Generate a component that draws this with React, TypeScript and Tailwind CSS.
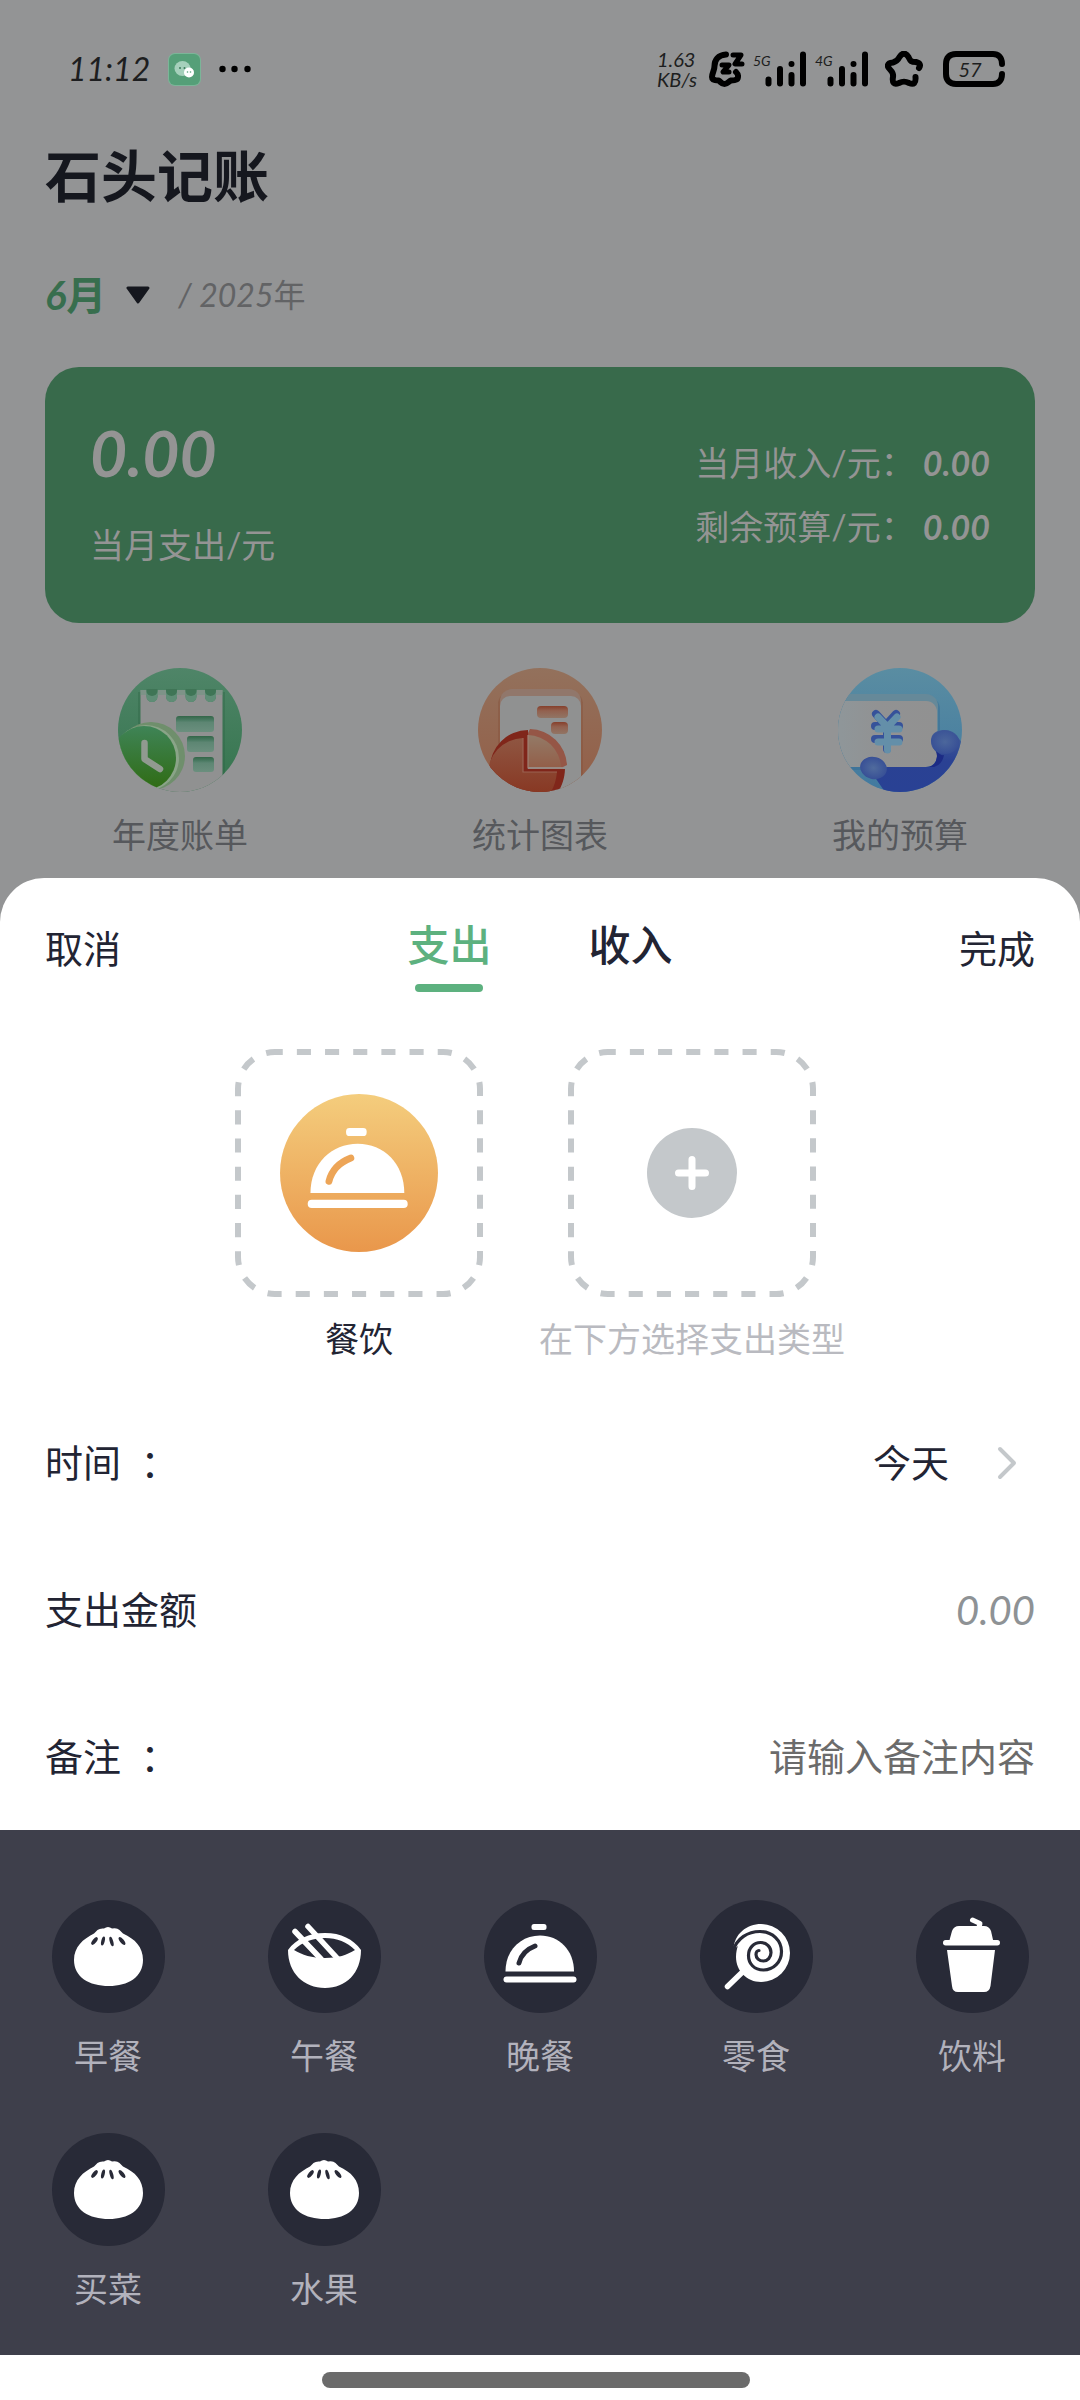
import React, { useState } from 'react';
import clsx from 'clsx';

type IconComponent = React.FC;

const AnnualBillIcon: IconComponent = () => (
  <svg viewBox="0 0 124 124" className="h-[124px] w-[124px]" aria-hidden="true">
    <defs>
      <clipPath id="bill-clip">
        <circle cx="62" cy="62" r="62" />
      </clipPath>
      <linearGradient id="bill-bg" x1="0" y1="0" x2="0" y2="1">
        <stop offset="0" stopColor="#4f8568" />
        <stop offset="1" stopColor="#34744d" />
      </linearGradient>
      <linearGradient id="bill-bar" x1="0" y1="0" x2="0" y2="1">
        <stop offset="0" stopColor="#336648" />
        <stop offset="0.25" stopColor="#4a7a62" />
        <stop offset="0.4" stopColor="#5d8673" />
        <stop offset="1" stopColor="#6b8f7e" />
      </linearGradient>
      <linearGradient id="bill-clock" x1="0" y1="0" x2="0" y2="1">
        <stop offset="0" stopColor="#3f8457" />
        <stop offset="1" stopColor="#2f6b12" />
      </linearGradient>
    </defs>
    <g clipPath="url(#bill-clip)">
      <rect width="124" height="124" fill="url(#bill-bg)" />
      <path d="M20 24h3v100h-3zM104 24h3v100h-3z" fill="#2c6143" opacity="0.35" />
      <path
        d="M22.500 22H28.500V28.500A5.500 5.500 0 0 0 39.500 28.500V22H48V28.500A5.500 5.500 0 0 0 59 28.500V22H67.500V28.500A5.500 5.500 0 0 0 78.500 28.500V22H87V28.500A5.500 5.500 0 0 0 98 28.500V22H104.500V124H22.500Z"
        fill="#909191"
      />
      <path d="M22.500 22H104.500V27H22.500Z" fill="#6f9581" opacity="0.55" />
      {[34, 53.5, 73, 92.5].map((x) => (
        <g key={x}>
          <path d={`M${x - 5.5} 22V28.500A5.500 5.500 0 0 0 ${x + 5.5} 28.500V22Z`} fill="#5f8d76" />
          <path d={`M${x - 5.5} 21V23A5.500 5 0 0 0 ${x + 5.5} 23V21Z`} fill="#3f7556" />
        </g>
      ))}
      <rect x="58" y="48" width="38" height="16" rx="3" fill="url(#bill-bar)" />
      <rect x="69" y="68" width="27" height="16" rx="3" fill="url(#bill-bar)" />
      <rect x="75" y="89" width="21" height="15" rx="3" fill="url(#bill-bar)" />
      <circle cx="33" cy="88" r="34" fill="#6f8f6c" />
      <circle cx="28" cy="90" r="33" fill="#8aa488" />
      <circle cx="26" cy="90" r="32" fill="url(#bill-clock)" />
      <path d="M26.500 75V91L42 101" fill="none" stroke="#919a90" strokeWidth="6.500" strokeLinecap="round" strokeLinejoin="round" />
    </g>
  </svg>
);

const StatsIcon: IconComponent = () => (
  <svg viewBox="0 0 124 124" className="h-[124px] w-[124px]" aria-hidden="true">
    <defs>
      <clipPath id="stats-clip">
        <circle cx="62" cy="62" r="62" />
      </clipPath>
      <linearGradient id="stats-bg" x1="0" y1="0" x2="0" y2="1">
        <stop offset="0" stopColor="#93715c" />
        <stop offset="1" stopColor="#935e47" />
      </linearGradient>
      <linearGradient id="stats-pie" x1="0" y1="0" x2="0" y2="1">
        <stop offset="0" stopColor="#8f5642" />
        <stop offset="1" stopColor="#86301b" />
      </linearGradient>
      <linearGradient id="stats-slice" x1="0" y1="0" x2="0" y2="1">
        <stop offset="0" stopColor="#937a67" />
        <stop offset="1" stopColor="#935f49" />
      </linearGradient>
      <linearGradient id="stats-bar" x1="0" y1="0" x2="0" y2="1">
        <stop offset="0" stopColor="#863f2b" />
        <stop offset="0.4" stopColor="#92614f" />
        <stop offset="1" stopColor="#917565" />
      </linearGradient>
    </defs>
    <g clipPath="url(#stats-clip)">
      <rect width="124" height="124" fill="url(#stats-bg)" />
      <rect x="20" y="24" width="85" height="112" rx="12" fill="#854f3a" opacity="0.4" />
      <rect x="22" y="21" width="81" height="114" rx="12" fill="#91776b" />
      <rect x="22" y="28" width="81" height="110" rx="10" fill="#909191" />
      <rect x="59" y="38" width="31" height="12" rx="4" fill="url(#stats-bar)" />
      <rect x="73" y="54" width="17" height="12" rx="4" fill="url(#stats-bar)" />
      <path d="M50 62A38 38 0 0 0 12 100A38 38 0 0 0 50 138C72 138 86 124 87 101H50Z" fill="#80261a" />
      <path d="M45 70A36 36 0 0 0 10 108A34 34 0 0 0 44 140C66 140 77 124 79 104H45Z" fill="url(#stats-pie)" />
      <path d="M45 70V104H79" fill="none" stroke="#9a6352" strokeWidth="1.200" />
      <path d="M52 61A38 38 0 0 1 89 97L85 99H50V65Z" fill="#955646" />
      <path d="M50 67A34 34 0 0 1 83 99H50Z" fill="url(#stats-slice)" />
      <path d="M50 67V100H85" fill="none" stroke="#a08174" strokeWidth="1.200" />
    </g>
  </svg>
);

const BudgetIcon: IconComponent = () => (
  <svg viewBox="0 0 124 124" className="h-[124px] w-[124px]" aria-hidden="true">
    <defs>
      <clipPath id="budget-clip">
        <circle cx="62" cy="62" r="62" />
      </clipPath>
      <linearGradient id="budget-bg" x1="0" y1="0" x2="0" y2="1">
        <stop offset="0" stopColor="#5a8da2" />
        <stop offset="1" stopColor="#41799f" />
      </linearGradient>
      <linearGradient id="budget-card" x1="0" y1="0" x2="1" y2="0">
        <stop offset="0" stopColor="#8f9699" />
        <stop offset="0.2" stopColor="#8f9699" />
        <stop offset="0.5" stopColor="#919293" />
        <stop offset="1" stopColor="#919191" />
      </linearGradient>
      <linearGradient id="budget-hand" x1="0" y1="0" x2="0" y2="1">
        <stop offset="0" stopColor="#456197" />
        <stop offset="0.5" stopColor="#2a4193" />
        <stop offset="1" stopColor="#294194" />
      </linearGradient>
      <radialGradient id="budget-thumb">
        <stop offset="0" stopColor="#506b9d" />
        <stop offset="1" stopColor="#385096" />
      </radialGradient>
    </defs>
    <g clipPath="url(#budget-clip)">
      <rect width="124" height="124" fill="url(#budget-bg)" />
      <rect x="-20" y="29" width="122" height="73" rx="12" fill="#356b92" opacity="0.45" />
      <rect x="-20" y="26" width="120" height="70" rx="12" fill="#668999" />
      <rect x="-20" y="33" width="119" height="66" rx="11" fill="url(#budget-card)" />
      <path
        d="M36 108L47 124H124V75Q117 62 105 62Q93 63 93 73Q94 80 99 85V90Q98 99 88 99H49Z"
        fill="url(#budget-hand)"
      />
      <path d="M98 83Q103 88 106 87Q104 97 96 99H88Q98 99 99 88Z" fill="#1c2b85" />
      <ellipse cx="107" cy="74" rx="14" ry="12" fill="url(#budget-thumb)" opacity="0.8" />
      <ellipse cx="35.500" cy="100" rx="13.500" ry="11" fill="url(#budget-thumb)" transform="rotate(14 35.500 100)" />
      <path d="M38 46L48 57L58 46M37 58H61M37 71H61M49 58V81" fill="none" stroke="#36529a" strokeWidth="8" strokeLinecap="round" strokeLinejoin="round" />
      <path d="M40 49L49.500 59L59 49M40 61H61M40 74H61M49.500 60V82" fill="none" stroke="#648fa9" strokeWidth="7" strokeLinecap="round" strokeLinejoin="round" />
    </g>
  </svg>
);

const BunIcon: IconComponent = () => (
  <svg viewBox="0 0 113 113" className="h-[113px] w-[113px]" aria-hidden="true">
    <path
      d="M45.500 30Q48 28 52 28.500Q56 25.500 60 28.500Q65 27.500 67.500 30L71 33.500C83 39 91 47 91 60C91 77 76 86 57 86C37 86 22 77 22 60C22 47 31 39 42 33.500Z"
      fill="#fff"
    />
    <g fill="#282a37">
      <ellipse cx="42.500" cy="41" rx="2" ry="4.600" transform="rotate(38 42.500 41)" />
      <ellipse cx="51" cy="41" rx="1.700" ry="4.600" transform="rotate(14 51 41)" />
      <ellipse cx="59.500" cy="41.500" rx="1.700" ry="5" transform="rotate(-16 59.500 41.500)" />
      <ellipse cx="70" cy="41" rx="2" ry="4.800" transform="rotate(-38 70 41)" />
    </g>
  </svg>
);

const BowlIcon: IconComponent = () => (
  <svg viewBox="0 0 113 113" className="h-[113px] w-[113px]" aria-hidden="true">
    <path
      fillRule="evenodd"
      d="M20 50C28 39 41 33 57 33S85 39 93 50C93 73 78 88 57 88S20 73 20 50ZM26 50C34 55 44 58 57 58S79 55 87 50C79 42 69 38 57 38S34 42 26 50Z"
      fill="#fff"
    />
    <path d="M27 31.500L53 59M40 26.500L70 59" fill="none" stroke="#fff" strokeWidth="5.500" strokeLinecap="round" />
  </svg>
);

const ClocheShape: React.FC<{ shine: string }> = ({ shine }) => (
  <>
    <rect x="47.500" y="24" width="15" height="6" rx="2.500" fill="#fff" />
    <path d="M21.500 71.500C21.500 50 37 35.500 56 35.500S90 50 90 71.500Z" fill="#fff" />
    <rect x="19.500" y="76.500" width="73" height="6" rx="3" fill="#fff" />
    <path d="M35 63Q38 51 51 46" fill="none" stroke={shine} strokeWidth="5" strokeLinecap="round" />
  </>
);

const ClocheIcon: IconComponent = () => (
  <svg viewBox="0 0 113 113" className="h-[113px] w-[113px]" aria-hidden="true">
    <ClocheShape shine="#282a37" />
  </svg>
);

const LollipopIcon: IconComponent = () => (
  <svg viewBox="0 0 113 113" className="h-[113px] w-[113px]" aria-hidden="true">
    <path d="M27.500 86.500L43 71.500" stroke="#fff" strokeWidth="5.500" strokeLinecap="round" />
    <path
      d="M33.500 49.500C34 34 47 24 61 24A29 29 0 0 1 61 82C47 82 36 71 36 57C36 52 37 48 38 46Z"
      fill="#fff"
    />
    <path
      d="M33 51C37 38 48 31.500 60 31.500C73 31.500 81.500 41 81.500 51.500C81.500 62 73.500 70 63.500 70C54 70 48.500 63.500 48.500 55.500C48.500 48 54 42.500 60.500 42.500C67 42.500 71 47.500 71 52.500C71 57.500 67.500 61 63.500 61C59 61 56 58 56 54.500C56 52 57.500 50.500 59 50.500"
      fill="none"
      stroke="#282a37"
      strokeWidth="3.200"
      strokeLinecap="round"
    />
  </svg>
);

const DrinkIcon: IconComponent = () => (
  <svg viewBox="0 0 113 113" className="h-[113px] w-[113px]" aria-hidden="true">
    <path d="M56.500 20L64 23.500L62.500 29" fill="none" stroke="#fff" strokeWidth="5" strokeLinecap="round" strokeLinejoin="round" />
    <path d="M33 42L36 31Q38 26 43 26H68Q73 26 75 31L77.500 42Z" fill="#fff" />
    <rect x="27" y="40" width="57" height="5.500" rx="2.700" fill="#fff" />
    <path d="M31 50H79L74.500 86Q73.500 92 68 92H42Q36.500 92 36 86Z" fill="#fff" />
  </svg>
);

const SignalIcon: React.FC<{ label: string }> = ({ label }) => (
  <span className="flex h-9 items-start">
    <span className="w-3 pt-1 text-sm leading-3 whitespace-nowrap italic">{label}</span>
    <svg viewBox="0 0 42 36" className="h-9 w-[42px]" aria-hidden="true">
      <path d="M3.500 28.500V32.500M15 18V32.500M26.500 24V32.500M26.500 13V13.100M38 3.500V32.500" stroke="#000" strokeWidth="6" strokeLinecap="round" />
    </svg>
  </span>
);

const StatusBar: React.FC = () => (
  <header className="flex h-[138px] items-center justify-between pr-[75px] pl-[68px] text-[#1d1e20]">
    <div className="flex items-center">
      <span className="text-[32px] leading-10 italic">11:12</span>
      <svg viewBox="0 0 33 33" className="ml-[18px] h-[33px] w-[33px]" aria-hidden="true">
        <rect width="33" height="33" rx="7" fill="#7bb598" />
        <rect x="1" y="1" width="31" height="31" rx="6" fill="#559f78" />
        <ellipse cx="14.500" cy="15.500" rx="8" ry="7.500" fill="#a5d0bb" />
        <circle cx="12" cy="15" r="1" fill="#3c7a5a" />
        <circle cx="16.500" cy="15" r="1" fill="#3c7a5a" />
        <circle cx="21" cy="19.500" r="5" fill="#fff" />
        <circle cx="19.500" cy="19" r="0.800" fill="#559f78" />
        <circle cx="22.500" cy="19" r="0.800" fill="#559f78" />
      </svg>
      <svg viewBox="0 0 32 8" className="ml-[18px] h-2 w-8" aria-hidden="true">
        <circle cx="3.500" cy="4" r="3.200" />
        <circle cx="15.500" cy="4" r="3.200" />
        <circle cx="28.500" cy="4" r="3.200" />
      </svg>
    </div>

    <div className="flex items-center">
      <span className="text-xl leading-5 italic">
        1.63
        <br />
        KB/s
      </span>
      <svg viewBox="0 0 36 36" className="ml-3 h-9 w-9" aria-hidden="true">
        <path
          d="M17 3.500C9 4 5.500 9 5.500 15C5.500 20 3 22 3 26C3 28.500 6 29.500 9.500 29.500C11.500 30.500 12.500 33 15.500 33S20 30 22 29.500C27 29.500 29.500 28.500 29 24.500C29 23 28 22 27 21"
          fill="none"
          stroke="#000"
          strokeWidth="6"
          strokeLinecap="round"
          strokeLinejoin="round"
        />
        <path d="M24 4H32L26 13H33M13 14H20L14 21H20" fill="none" stroke="#000" strokeWidth="5" strokeLinecap="round" strokeLinejoin="round" />
      </svg>
      <span className="ml-2 flex gap-2">
        <SignalIcon label="5G" />
        <SignalIcon label="4G" />
      </span>
      <svg viewBox="0 0 38 36" className="ml-4 h-9 w-[38px]" aria-hidden="true">
        <path
          d="M34 17C36 14 35 12 31 11C25 11 25 9 23.500 6C21 1.500 17 1.500 14.500 6C13 9 12 10.500 8 11.500C2 12 1.500 15 5 18.500C8 21.500 8.500 23 8 26C7 32 9 34 14 32C18 30 20 30 24 32C29 34 31 32 30.500 26"
          fill="none"
          stroke="#000"
          strokeWidth="6"
          strokeLinecap="round"
          strokeLinejoin="round"
        />
      </svg>
      <span className="ml-5 grid h-9 w-[62px] items-center">
        <svg viewBox="0 0 62 36" className="col-start-1 row-start-1 h-9 w-[62px]" aria-hidden="true">
          <path d="M59 13C59 6 55 3 50 3H13C6 3 3 7 3 13V23C3 29 6 33 13 33H50C55 33 59 30 59 23" fill="none" stroke="#000" strokeWidth="6" strokeLinecap="round" />
        </svg>
        <span className="col-start-1 row-start-1 pr-2 text-center text-xl leading-5 italic">57</span>
      </span>
    </div>
  </header>
);

const SHORTCUTS: { label: string; icon: IconComponent }[] = [
  { label: '年度账单', icon: AnnualBillIcon },
  { label: '统计图表', icon: StatsIcon },
  { label: '我的预算', icon: BudgetIcon },
];

const CATEGORIES: { label: string; icon: IconComponent }[] = [
  { label: '早餐', icon: BunIcon },
  { label: '午餐', icon: BowlIcon },
  { label: '晚餐', icon: ClocheIcon },
  { label: '零食', icon: LollipopIcon },
  { label: '饮料', icon: DrinkIcon },
  { label: '买菜', icon: BunIcon },
  { label: '水果', icon: BunIcon },
];

const SUMMARY = [
  { label: '当月收入/元：', value: '0.00' },
  { label: '剩余预算/元：', value: '0.00' },
];

const TABS = ['支出', '收入'];

const DashedFrame: React.FC<{ children: React.ReactNode }> = ({ children }) => (
  <svg viewBox="0 0 248 248" className="h-[248px] w-[248px]" aria-hidden="true">
    <rect
      x="3"
      y="3"
      width="242"
      height="242"
      rx="37"
      fill="none"
      stroke="#c4c8cb"
      strokeWidth="6"
      strokeDasharray="14.085"
      strokeDashoffset="6.300"
    />
    {children}
  </svg>
);

const Overview: React.FC = () => (
  <main className="pb-[18px]">
    <div className="px-[45px]">
      <h1 className="text-[56px] leading-[76px] font-bold text-[#15171e]">石头记账</h1>
      <div className="mt-[41px] flex h-20 items-center">
        <button className="flex items-center gap-5 text-[40px] font-bold text-[#386e4e]">
          <span>
            <span className="italic">6</span>月
          </span>
          <svg viewBox="0 0 24 18" className="h-[18px] w-6" aria-hidden="true">
            <path d="M2 2H22L12 16Z" fill="#15171e" stroke="#15171e" strokeWidth="3" strokeLinejoin="round" />
          </svg>
        </button>
        <span className="ml-7 text-[32px] text-[#626365]">
          <span className="italic">/ 2025</span>年
        </span>
      </div>

      <section className="mt-8 flex h-64 items-center justify-between rounded-[34px] bg-[#386a4b] px-[45px] text-[34px] leading-[48px] text-[#949494]">
        <div className="pb-3">
          <p className="text-[64px] leading-[88px] font-bold italic">0.00</p>
          <p className="mt-6">当月支出/元</p>
        </div>
        <dl className="flex flex-col gap-4">
          {SUMMARY.map((item) => (
            <div key={item.label} className="flex justify-between gap-2">
              <dt>{item.label}</dt>
              <dd className="font-bold italic">{item.value}</dd>
            </div>
          ))}
        </dl>
      </section>
    </div>

    <nav className="mt-[45px] grid grid-cols-3">
      {SHORTCUTS.map(({ label, icon: Icon }) => (
        <button key={label} className="flex flex-col items-center gap-[18px] text-[34px] leading-[50px] text-[#56585c]">
          <Icon />
          {label}
        </button>
      ))}
    </nav>
  </main>
);

const App: React.FC = () => {
  const [activeTab, setActiveTab] = useState('支出');
  const [amount, setAmount] = useState('');
  const [note, setNote] = useState('');

  return (
    <div className="flex min-h-screen flex-col bg-[#939495] font-['Lato','Noto_Sans_CJK_SC',sans-serif]">
      <StatusBar />
      <Overview />

      <section className="flex flex-1 flex-col overflow-hidden rounded-t-[44px] bg-white text-[38px] text-[#222433]">
        <div className="flex items-start justify-between px-[45px] pt-9">
          <button className="leading-[68px]">取消</button>
          <div className="flex gap-[97px]" role="tablist">
            {TABS.map((tab) => (
              <button
                key={tab}
                role="tab"
                aria-selected={activeTab === tab}
                onClick={() => setActiveTab(tab)}
                className={clsx(
                  'flex flex-col items-center gap-2 text-[42px] leading-[62px] font-medium',
                  activeTab === tab && 'text-[#5db17f]'
                )}
              >
                {tab}
                <span className={clsx('h-2 w-[68px] rounded-full', activeTab === tab && 'bg-[#5db17f]')} />
              </button>
            ))}
          </div>
          <button className="leading-[68px]">完成</button>
        </div>

        <div className="mt-[57px] flex justify-center gap-14 text-[34px] leading-[48px]">
          <button className="flex flex-col items-center gap-[18px]">
            <DashedFrame>
              <defs>
                <linearGradient id="dining-bg" x1="0" y1="0" x2="0" y2="1">
                  <stop offset="0" stopColor="#f4cd7d" />
                  <stop offset="1" stopColor="#e9974b" />
                </linearGradient>
              </defs>
              <circle cx="124" cy="124" r="79" fill="url(#dining-bg)" />
              <g transform="translate(46 46) scale(1.370)">
                <ClocheShape shine="#eda557" />
              </g>
            </DashedFrame>
            餐饮
          </button>
          <button className="flex flex-col items-center gap-[18px] text-[#b9bac0]">
            <DashedFrame>
              <circle cx="124" cy="124" r="45" fill="#c4c8cb" />
              <path d="M124 110.500V137.500M110.500 124H137.500" stroke="#fff" strokeWidth="7" strokeLinecap="round" />
            </DashedFrame>
            在下方选择支出类型
          </button>
        </div>

        <form className="mt-[26px] px-[45px]" onSubmit={(e) => e.preventDefault()}>
          <div className="flex h-[147px] items-center justify-between">
            <span id="date-label" className="whitespace-pre">{'时间  ：'}</span>
            <button type="button" aria-labelledby="date-label" className="flex items-center gap-12 pr-[18px]">
              今天
              <svg viewBox="0 0 20 34" className="h-[34px] w-5" aria-hidden="true">
                <path d="M3 3L17 17L3 31" fill="none" stroke="#c4c8cb" strokeWidth="4" strokeLinecap="round" strokeLinejoin="round" />
              </svg>
            </button>
          </div>
          <div className="flex h-[147px] items-center justify-between">
            <label htmlFor="amount">支出金额</label>
            <input
              id="amount"
              inputMode="decimal"
              placeholder="0.00"
              value={amount}
              onChange={(e) => setAmount(e.target.value)}
              className="min-w-0 flex-1 text-right text-[40px] italic outline-none placeholder:text-[#8e9295]"
            />
          </div>
          <div className="flex h-[147px] items-center justify-between">
            <label htmlFor="note" className="whitespace-pre">{'备注  ：'}</label>
            <input
              id="note"
              placeholder="请输入备注内容"
              value={note}
              onChange={(e) => setNote(e.target.value)}
              className="min-w-0 flex-1 text-right outline-none placeholder:text-[#6b6b6b]"
            />
          </div>
        </form>

        <div className="grid flex-1 grid-cols-5 content-start gap-y-[53px] bg-[#3e3f4b] pt-[70px] pb-[42px]">
          {CATEGORIES.map(({ label, icon: Icon }) => (
            <button key={label} className="flex flex-col items-center gap-[19px] text-[34px] leading-[48px] text-[#b2b2bc]">
              <span className="rounded-full bg-[#282a37]">
                <Icon />
              </span>
              {label}
            </button>
          ))}
        </div>

        <footer className="flex h-[45px] items-center justify-center pt-1 pr-2">
          <span className="h-4 w-[428px] rounded-full bg-[#6b6b6b]" />
        </footer>
      </section>
    </div>
  );
};

export default App;
